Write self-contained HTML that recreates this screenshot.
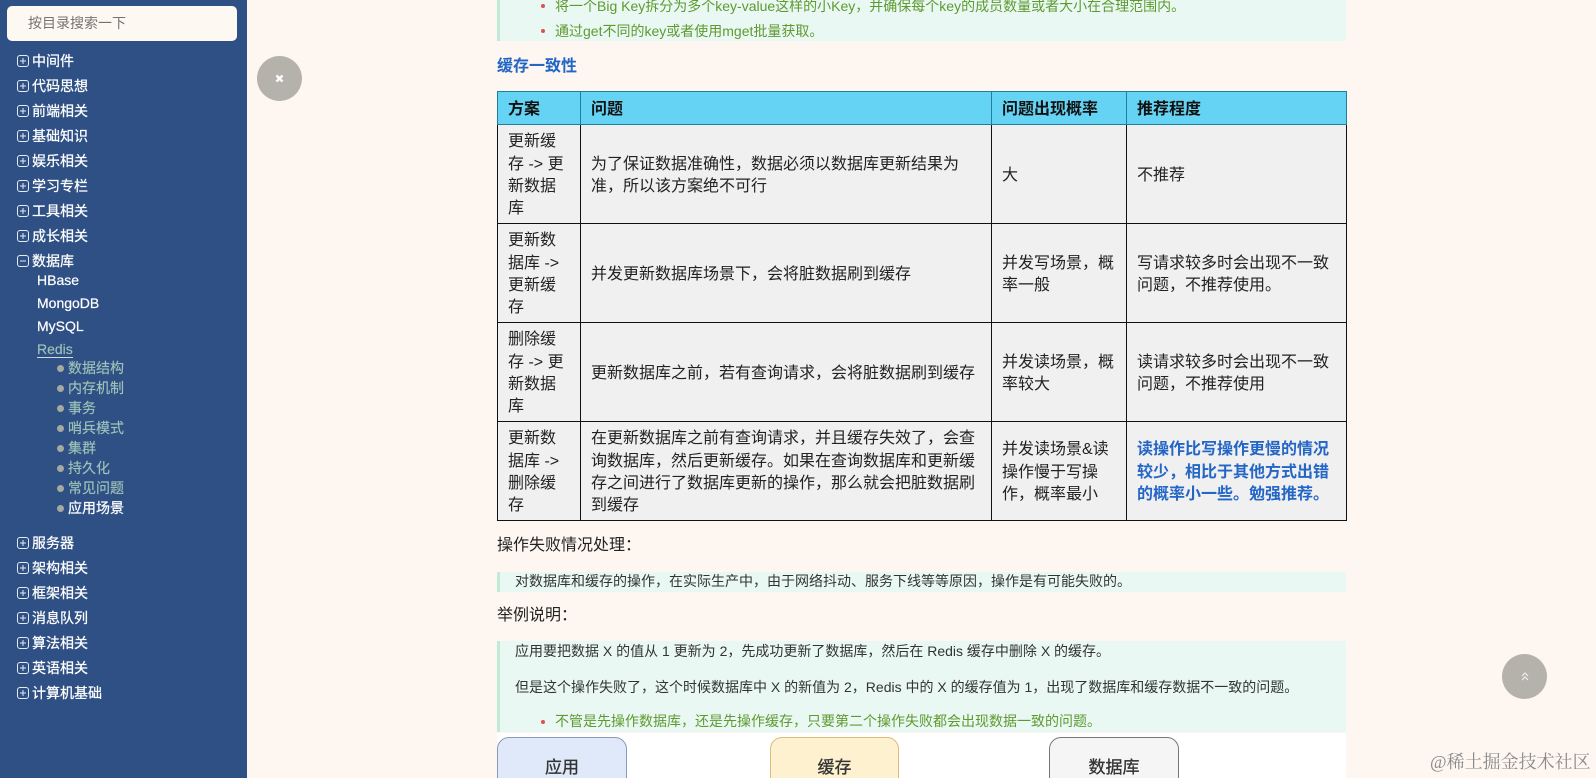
<!DOCTYPE html>
<html lang="zh-CN">
<head>
<meta charset="utf-8">
<title>Redis 应用场景</title>
<style>
*{box-sizing:border-box}
html,body{margin:0;padding:0;width:1596px;height:778px;overflow:hidden;background:#fef7f1;font-family:"Liberation Sans","Noto Sans CJK SC",sans-serif;color:#222}
#wrap{position:relative;width:1596px;height:778px;overflow:hidden;background:#fef7f1;filter:blur(.3px)}
.a{position:absolute;white-space:nowrap}
#side{position:absolute;left:0;top:0;width:247px;height:778px;background:#2f5085}
#search{position:absolute;left:7px;top:6px;width:230px;height:35px;background:#fdf8f2;border-radius:5px;color:#77736e;font-size:14px;line-height:35px;padding-left:21px}
.m{position:absolute;left:32px;height:20px;line-height:20px;font-size:14px;color:#fff;white-space:nowrap;-webkit-text-stroke:.25px #fff}
.i{position:absolute;left:17px;width:12px;height:12px;overflow:visible}
.s{position:absolute;left:37px;height:20px;line-height:20px;font-size:14px;color:#fff;-webkit-text-stroke:.2px #fff}
.t{position:absolute;left:68px;height:20px;line-height:20px;font-size:14px;color:#9fc2b8;white-space:nowrap;-webkit-text-stroke:.15px #9fc2b8}
.d{position:absolute;left:57px;width:7px;height:7px;border-radius:50%;background:#a6a99f}
.q{position:absolute;left:497px;width:849px;background:#e9f8f3;border-left:3px solid #c3e9d9}
.g{color:#5f9a30;font-size:14px;line-height:20px;height:20px}
.b{color:#333;font-size:14px;line-height:20px;height:20px}
.r{position:absolute;left:541px;width:4px;height:4px;border-radius:50%;background:#d9534f}
table{position:absolute;left:497px;top:91px;width:849px;border-collapse:collapse;table-layout:fixed;font-size:16px;line-height:22.4px;color:#222}
th,td{border:1px solid #111;padding:4px 10px 0;text-align:left;vertical-align:middle}
th{background:#65d4f4;height:33px;padding-top:4px;font-weight:700;color:#111;border-color:#1f7f9c}
td{background:#f0f0f0;height:99px}
td b{color:#2366c6}
.box{position:absolute;top:737px;width:130px;height:60px;border-radius:12px;border:1px solid;text-align:center;font-size:17px;line-height:60px;color:#333;-webkit-text-stroke:.3px #333}
.circ{position:absolute;width:45px;height:45px;border-radius:50%;background:#b5b2ac}
</style>
</head>
<body>
<div id="wrap">
<div id="side">
  <div id="search">按目录搜索一下</div>
  <svg width="0" height="0" style="position:absolute"><defs>
    <g id="pl"><rect x=".5" y=".5" width="11" height="11" rx="2.5" fill="none" stroke="#e6ebf2" stroke-width="1"/><path d="M3 6h6M6 3v6" stroke="#e6ebf2" stroke-width="1"/></g>
    <g id="mi"><rect x=".5" y=".5" width="11" height="11" rx="2.5" fill="none" stroke="#e6ebf2" stroke-width="1"/><path d="M3 6h6" stroke="#e6ebf2" stroke-width="1"/></g>
  </defs></svg>
  <svg class="i" style="top:55px"><use href="#pl"/></svg><div class="m" style="top:51px">中间件</div>
  <svg class="i" style="top:80px"><use href="#pl"/></svg><div class="m" style="top:76px">代码思想</div>
  <svg class="i" style="top:105px"><use href="#pl"/></svg><div class="m" style="top:101px">前端相关</div>
  <svg class="i" style="top:130px"><use href="#pl"/></svg><div class="m" style="top:126px">基础知识</div>
  <svg class="i" style="top:155px"><use href="#pl"/></svg><div class="m" style="top:151px">娱乐相关</div>
  <svg class="i" style="top:180px"><use href="#pl"/></svg><div class="m" style="top:176px">学习专栏</div>
  <svg class="i" style="top:205px"><use href="#pl"/></svg><div class="m" style="top:201px">工具相关</div>
  <svg class="i" style="top:230px"><use href="#pl"/></svg><div class="m" style="top:226px">成长相关</div>
  <svg class="i" style="top:255px"><use href="#mi"/></svg><div class="m" style="top:251px">数据库</div>

  <div class="s" style="top:270px">HBase</div>
  <div class="s" style="top:293px">MongoDB</div>
  <div class="s" style="top:316px">MySQL</div>
  <div class="s" style="top:339px;color:#9fc2b8;-webkit-text-stroke:.15px #9fc2b8;height:19px;border-bottom:1px solid #cfdcdc">Redis</div>

  <div class="d" style="top:365px"></div><div class="t" style="top:358px">数据结构</div>
  <div class="d" style="top:385px"></div><div class="t" style="top:378px">内存机制</div>
  <div class="d" style="top:405px"></div><div class="t" style="top:398px">事务</div>
  <div class="d" style="top:425px"></div><div class="t" style="top:418px">哨兵模式</div>
  <div class="d" style="top:445px"></div><div class="t" style="top:438px">集群</div>
  <div class="d" style="top:465px"></div><div class="t" style="top:458px">持久化</div>
  <div class="d" style="top:485px"></div><div class="t" style="top:478px">常见问题</div>
  <div class="d" style="top:505px"></div><div class="t" style="top:498px;color:#fff;-webkit-text-stroke:.25px #fff">应用场景</div>

  <svg class="i" style="top:537px"><use href="#pl"/></svg><div class="m" style="top:533px">服务器</div>
  <svg class="i" style="top:562px"><use href="#pl"/></svg><div class="m" style="top:558px">架构相关</div>
  <svg class="i" style="top:587px"><use href="#pl"/></svg><div class="m" style="top:583px">框架相关</div>
  <svg class="i" style="top:612px"><use href="#pl"/></svg><div class="m" style="top:608px">消息队列</div>
  <svg class="i" style="top:637px"><use href="#pl"/></svg><div class="m" style="top:633px">算法相关</div>
  <svg class="i" style="top:662px"><use href="#pl"/></svg><div class="m" style="top:658px">英语相关</div>
  <svg class="i" style="top:687px"><use href="#pl"/></svg><div class="m" style="top:683px">计算机基础</div>
</div>

<div class="circ" style="left:257px;top:56px"></div>
<svg class="a" style="left:275px;top:74px" width="9" height="9"><path d="M1.5 1.5l6 6M7.5 1.5l-6 6" stroke="#fff" stroke-width="2.4"/></svg>

<div class="q" style="top:0;height:41px"></div>
<div class="r" style="top:4px"></div>
<div class="a g" style="left:555px;top:-4px">将一个Big Key拆分为多个key-value这样的小Key，并确保每个key的成员数量或者大小在合理范围内。</div>
<div class="r" style="top:29px"></div>
<div class="a g" style="left:555px;top:21px">通过get不同的key或者使用mget批量获取。</div>

<div class="a" style="left:497px;top:55px;font-size:16px;line-height:24px;font-weight:700;color:#2366c6">缓存一致性</div>

<table>
<colgroup><col style="width:83px"><col style="width:411px"><col style="width:135px"><col style="width:220px"></colgroup>
<tr><th>方案</th><th>问题</th><th>问题出现概率</th><th>推荐程度</th></tr>
<tr><td>更新缓<br>存 -&gt; 更<br>新数据<br>库</td><td>为了保证数据准确性，数据必须以数据库更新结果为<br>准，所以该方案绝不可行</td><td>大</td><td>不推荐</td></tr>
<tr><td>更新数<br>据库 -&gt;<br>更新缓<br>存</td><td>并发更新数据库场景下，会将脏数据刷到缓存</td><td>并发写场景，概<br>率一般</td><td>写请求较多时会出现不一致<br>问题，不推荐使用。</td></tr>
<tr><td>删除缓<br>存 -&gt; 更<br>新数据<br>库</td><td>更新数据库之前，若有查询请求，会将脏数据刷到缓存</td><td>并发读场景，概<br>率较大</td><td>读请求较多时会出现不一致<br>问题，不推荐使用</td></tr>
<tr><td>更新数<br>据库 -&gt;<br>删除缓<br>存</td><td>在更新数据库之前有查询请求，并且缓存失效了，会查<br>询数据库，然后更新缓存。如果在查询数据库和更新缓<br>存之间进行了数据库更新的操作，那么就会把脏数据刷<br>到缓存</td><td>并发读场景&amp;读<br>操作慢于写操<br>作，概率最小</td><td><b>读操作比写操作更慢的情况<br>较少，相比于其他方式出错<br>的概率小一些。勉强推荐。</b></td></tr>
</table>

<div class="a" style="left:497px;top:534px;font-size:16px;line-height:24px">操作失败情况处理：</div>
<div class="q" style="top:572px;height:20px"></div>
<div class="a b" style="left:515px;top:571px">对数据库和缓存的操作，在实际生产中，由于网络抖动、服务下线等等原因，操作是有可能失败的。</div>
<div class="a" style="left:497px;top:604px;font-size:16px;line-height:24px">举例说明：</div>

<div class="q" style="top:641px;height:91px"></div>
<div class="a b" style="left:515px;top:641px">应用要把数据 X 的值从 1 更新为 2，先成功更新了数据库，然后在 Redis 缓存中删除 X 的缓存。</div>
<div class="a b" style="left:515px;top:677px">但是这个操作失败了，这个时候数据库中 X 的新值为 2，Redis 中的 X 的缓存值为 1，出现了数据库和缓存数据不一致的问题。</div>
<div class="r" style="top:720px"></div>
<div class="a g" style="left:555px;top:711px">不管是先操作数据库，还是先操作缓存，只要第二个操作失败都会出现数据一致的问题。</div>

<div class="a" style="left:497px;top:733px;width:849px;height:45px;background:#fff"></div>
<div class="box" style="left:497px;background:#dfe9fa;border-color:#8a9ab5">应用</div>
<div class="box" style="left:770px;width:129px;background:#fdf1cf;border-color:#d9bd78">缓存</div>
<div class="box" style="left:1049px;background:#f5f5f5;border-color:#777">数据库</div>

<div class="circ" style="left:1502px;top:654px"></div>
<svg class="a" style="left:1521px;top:672px" width="8" height="9"><path d="M1 4l3-3 3 3M1 8l3-3 3 3" fill="none" stroke="#efeeea" stroke-width="1.2"/></svg>

<div class="a" style="left:1430px;top:750px;font-size:18px;line-height:24px;color:#8b8b8b;font-family:'Liberation Serif','Noto Serif CJK SC',serif">@稀土掘金技术社区</div>
</div>
</body>
</html>
